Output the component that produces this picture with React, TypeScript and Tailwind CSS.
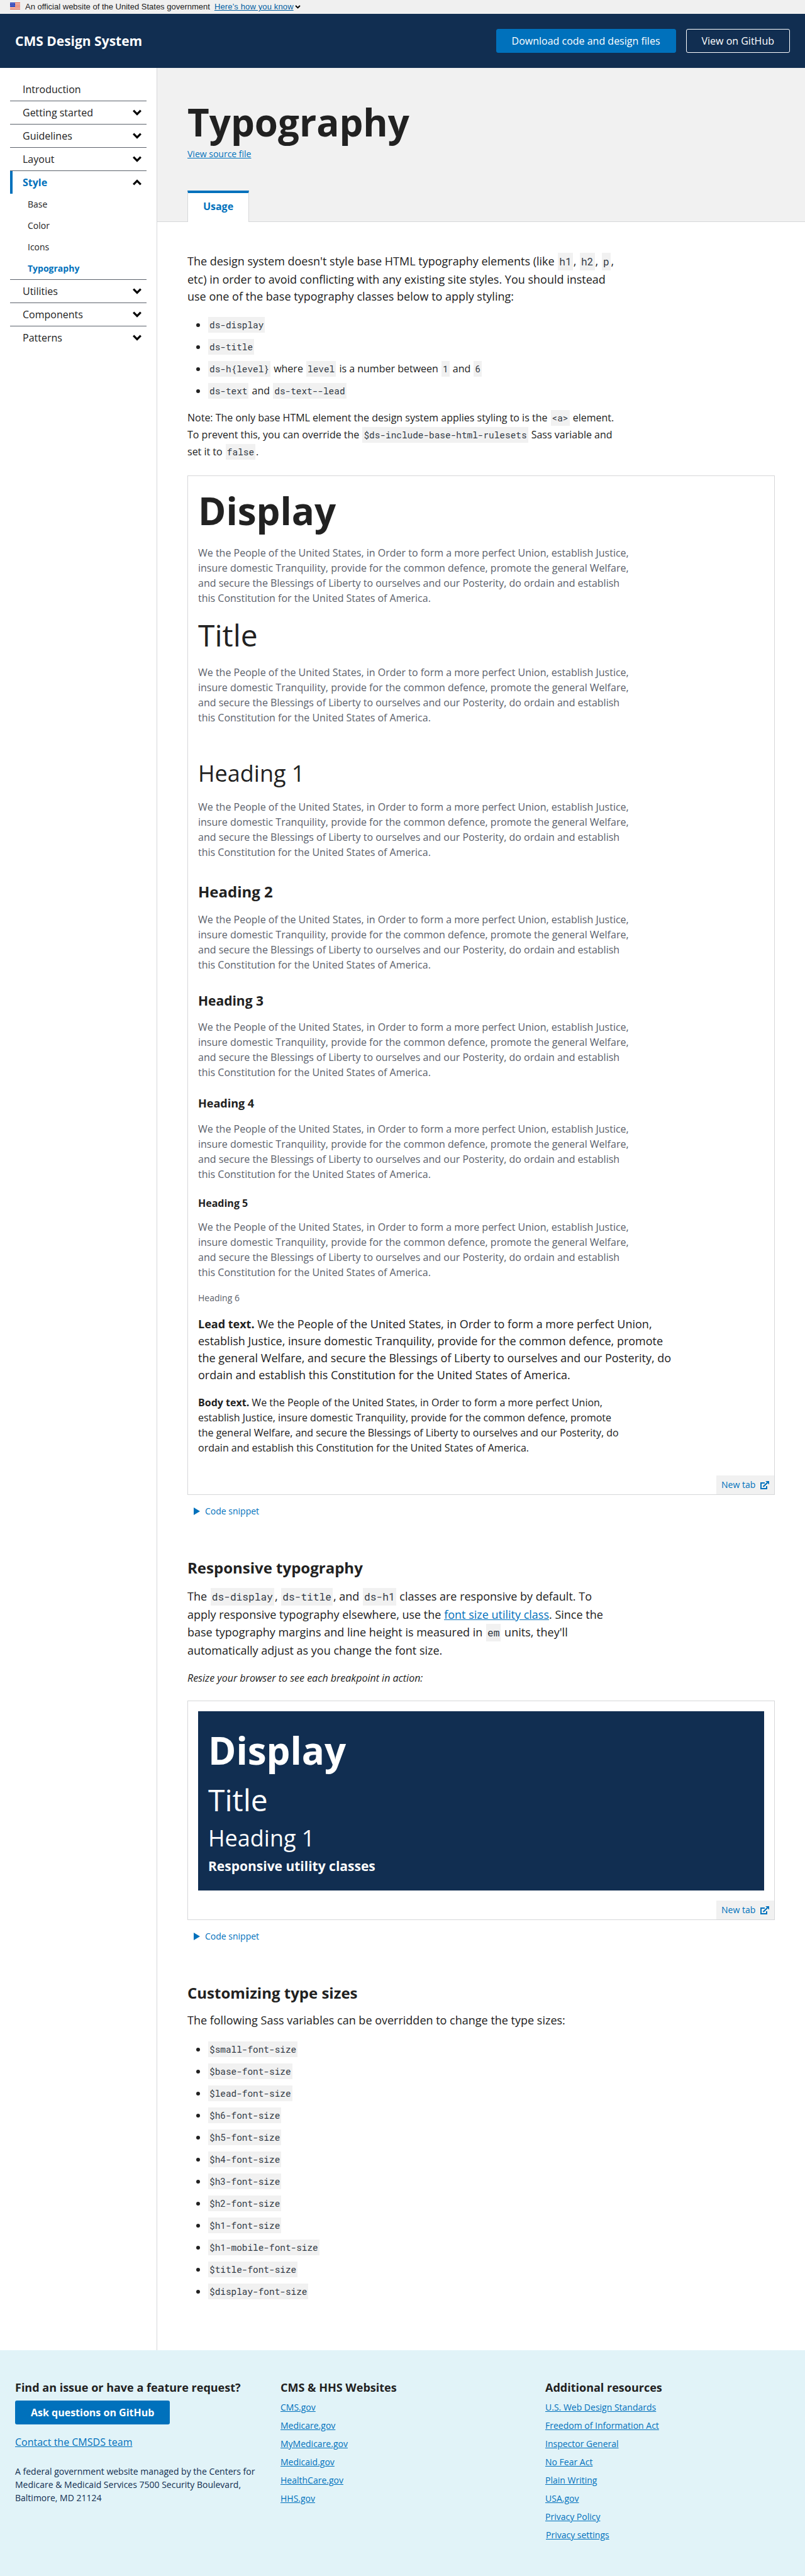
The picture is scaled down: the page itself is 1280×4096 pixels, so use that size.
import React from "react";

const PREAMBLE = [
  "We the People of the United States, in Order to form a more perfect Union, establish Justice,",
  "insure domestic Tranquility, provide for the common defence, promote the general Welfare,",
  "and secure the Blessings of Liberty to ourselves and our Posterity, do ordain and establish",
  "this Constitution for the United States of America.",
];

const SASS_VARIABLES = [
  "$small-font-size",
  "$base-font-size",
  "$lead-font-size",
  "$h6-font-size",
  "$h5-font-size",
  "$h4-font-size",
  "$h3-font-size",
  "$h2-font-size",
  "$h1-font-size",
  "$h1-mobile-font-size",
  "$title-font-size",
  "$display-font-size",
];

function Chevron({ className = "" }: { className?: string }) {
  return (
    <svg viewBox="0 0 14 10" fill="none" stroke="#000" strokeWidth="3.2" className={className}>
      <path d="M1.2 1.7 7 7.5l5.8-5.8" />
    </svg>
  );
}

function Flag() {
  const stripes = [0, 2, 4, 6, 8, 10];
  const stars = [
    [1, 1], [3, 1], [5, 1], [7, 1],
    [2, 2.5], [4, 2.5], [6, 2.5],
    [1, 4], [3, 4], [5, 4], [7, 4],
  ];
  return (
    <svg viewBox="0 0 16 11" className="h-[11px] w-4 shrink-0">
      <rect width="16" height="11" fill="#fff" />
      {stripes.map((y) => (
        <rect key={y} y={y} width="16" height="1" fill="#db3e1f" />
      ))}
      <rect width="8" height="7" fill="#1e33b1" />
      {stars.map(([x, y]) => (
        <rect key={`${x}-${y}`} x={x - 0.4} y={y} width="0.8" height="0.8" fill="#fff" />
      ))}
    </svg>
  );
}

function ExternalLink() {
  return (
    <svg viewBox="0 0 14 13" className="h-[13px] w-3.5 shrink-0" fill="none" stroke="currentColor" strokeWidth="2">
      <path d="M7 3H1v9h9V8" />
      <path d="M4.5 9 11 2.8" strokeWidth="2.2" />
      <path d="M8.2 0H14v5.6Z" fill="currentColor" stroke="none" />
    </svg>
  );
}

function Code({ children }: { children: React.ReactNode }) {
  return (
    <code className="mx-px bg-[#f1f1f1] px-0.5 py-[3px] font-['Roboto_Mono','Liberation_Mono',monospace] text-[0.9em] leading-none text-[#323a45]">
      {children}
    </code>
  );
}

function Line({ className, children }: { className: string; children: React.ReactNode }) {
  return <span className={`block whitespace-nowrap ${className}`}>{children}</span>;
}

function Preamble({ className }: { className: string }) {
  return (
    <p className={`text-[#5b616b] ${className}`}>
      {PREAMBLE.map((line) => (
        <Line key={line} className="leading-6">
          {line}
        </Line>
      ))}
    </p>
  );
}

function NavItem({ label, open, plain, last }: { label: string; open?: boolean; plain?: boolean; last?: boolean }) {
  return (
    <div className={last || open ? "" : "border-b border-[#5b616b]"}>
      <div
        className={
          open
            ? "flex h-9 items-center justify-between border-l-4 border-[#0071bc] pr-2 pl-4 font-bold text-[#0071bc]"
            : "flex h-9 items-center justify-between pr-2 pl-5"
        }
      >
        <span className="leading-6">{label}</span>
        {!plain && <Chevron className={open ? "h-2.5 w-3.5 rotate-180" : "h-2.5 w-3.5"} />}
      </div>
    </div>
  );
}

function Bullet({ children }: { children: React.ReactNode }) {
  return (
    <li className="flex h-[35px] items-start whitespace-nowrap">
      <span className="mt-2.5 mr-3 ml-3.5 size-1.5 shrink-0 rounded-full bg-[#212121]" />
      <span className="leading-6">{children}</span>
    </li>
  );
}

function NewTab() {
  return (
    <a className="absolute right-0 bottom-0 flex h-[30px] w-[92px] items-center gap-2 bg-[#f1f1f1] pl-2 text-sm leading-[30px] whitespace-nowrap text-[#0071bc]">
      New tab
      <ExternalLink />
    </a>
  );
}

function CodeSnippet() {
  return (
    <div className="mt-[15px] flex h-[21px] items-center gap-2 pl-2.5 text-sm leading-[21px] text-[#0071bc]">
      <svg viewBox="0 0 10 12" className="h-3 w-2.5" fill="currentColor">
        <path d="M0 0 10 6 0 12Z" />
      </svg>
      Code snippet
    </div>
  );
}

function FooterLinks({ title, links, nudgeLast }: { title: string; links: string[]; nudgeLast?: boolean }) {
  return (
    <div>
      <h2 className="text-lg leading-6 font-bold">{title}</h2>
      <ul className="mt-[9px] flex flex-col gap-2 text-sm leading-[21px] text-[#0071bc]">
        {links.map((link, i) => (
          <li key={link} className={nudgeLast && i === links.length - 1 ? "pl-px" : ""}>
            <a className="underline">{link}</a>
          </li>
        ))}
      </ul>
    </div>
  );
}

export default function App() {
  return (
    <div className="flex h-[4096px] w-[1280px] flex-col overflow-hidden bg-white font-['Open_Sans',sans-serif] text-base text-[#212121]">
      <div className="flex h-[22px] items-start bg-[#f0f0f0] pl-4 font-['Liberation_Sans',sans-serif] text-[13px] leading-[21px] text-[#1b1b1b]">
        <div className="mt-1 mr-2 flex">
          <Flag />
        </div>
        <span>An official website of the United States government</span>
        <a className="ml-[7px] tracking-[0.13px] text-[#005ea2] underline underline-offset-1">Here’s how you know</a>
        <Chevron className="mt-[8px] ml-[2px] h-1.5 w-[9px]" />
      </div>

      <header className="flex h-[86px] items-center justify-between bg-[#112e51] px-6 text-white">
        <span className="text-[21px] leading-7 font-bold">CMS Design System</span>
        <div className="flex gap-4">
          <a className="flex h-[38px] items-center rounded-[3px] border border-[#0071bc] bg-[#0071bc] px-6 leading-6">
            Download code and design files
          </a>
          <a className="flex h-[38px] items-center rounded-[3px] border border-white px-6 leading-6">View on GitHub</a>
        </div>
      </header>

      <div className="flex h-[3629px] shrink-0">
        <nav className="w-[250px] shrink-0 border-r border-[#d6d7d9] px-4 pt-4">
          <NavItem label="Introduction" plain />
          <NavItem label="Getting started" />
          <NavItem label="Guidelines" />
          <NavItem label="Layout" />
          <NavItem label="Style" open />
          <ul className="border-b border-[#5b616b] pl-7 text-sm leading-[34px]">
            <li>Base</li>
            <li>Color</li>
            <li>Icons</li>
            <li className="font-bold text-[#0071bc]">Typography</li>
          </ul>
          <NavItem label="Utilities" />
          <NavItem label="Components" />
          <NavItem label="Patterns" last />
        </nav>

        <main className="flex-1">
          <div className="h-[245px] border-b border-[#d6d7d9] bg-[#f1f1f1] px-12 pt-[47px]">
            <h1 className="text-[60px] leading-[78px] font-bold">Typography</h1>
            <a className="mt-px block text-sm leading-[21px] text-[#0071bc] underline">View source file</a>
            <div className="mt-12 h-[50px] w-[98px] border-x border-t-4 border-x-[#d6d7d9] border-t-[#0071bc] bg-white pt-[9px] text-center leading-6 font-bold text-[#0071bc]">
              Usage
            </div>
          </div>

          <div className="px-12 pt-[49px]">
            <p className="text-lg [&_code]:pb-1">
              <Line className="h-[29px] leading-[27px]">
                The design system doesn't style base HTML typography elements (like <Code>h1</Code>, <Code>h2</Code>,{" "}
                <Code>p</Code>,
              </Line>
              <Line className="leading-[27px]">
                etc) in order to avoid conflicting with any existing site styles. You should instead
              </Line>
              <Line className="leading-[27px]">use one of the base typography classes below to apply styling:</Line>
            </p>
            <ul className="mt-[19px]">
              <Bullet>
                <Code>ds-display</Code>
              </Bullet>
              <Bullet>
                <Code>ds-title</Code>
              </Bullet>
              <Bullet>
                <Code>{"ds-h{level}"}</Code> where <Code>level</Code> is a number between <Code>1</Code> and{" "}
                <Code>6</Code>
              </Bullet>
              <Bullet>
                <Code>ds-text</Code> and <Code>ds-text--lead</Code>
              </Bullet>
            </ul>
            <p className="mt-2">
              <Line className="h-[27px] leading-6">
                Note: The only base HTML element the design system applies styling to is the <Code>{"<a>"}</Code>{" "}
                element.
              </Line>
              <Line className="h-[27px] leading-6">
                To prevent this, you can override the <Code>$ds-include-base-html-rulesets</Code> Sass variable and
              </Line>
              <Line className="h-[27px] leading-6">
                set it to <Code>false</Code>.
              </Line>
            </p>

            <section className="relative mt-[23px] h-[1621px] border border-[#d6d7d9] p-4">
              <h2 className="text-[60px] leading-[78px] font-bold">Display</h2>
              <Preamble className="mt-4" />
              <h2 className="mt-[15px] text-5xl leading-[63px]">Title</h2>
              <Preamble className="mt-4" />
              <h2 className="mt-[53px] text-4xl leading-[47px]">Heading 1</h2>
              <Preamble className="mt-[18px]" />
              <h3 className="mt-[35px] text-2xl leading-[31px] font-bold">Heading 2</h3>
              <Preamble className="mt-[17px]" />
              <h3 className="mt-[31px] text-[21px] leading-7 font-bold">Heading 3</h3>
              <Preamble className="mt-4" />
              <h4 className="mt-[25px] text-lg leading-6 font-bold">Heading 4</h4>
              <Preamble className="mt-[17px]" />
              <h5 className="mt-[22px] leading-6 font-bold">Heading 5</h5>
              <Preamble className="mt-3.5" />
              <h6 className="mt-[18px] text-sm leading-[21px] text-[#5b616b]">Heading 6</h6>
              <p className="mt-[18px] text-lg">
                <Line className="leading-[27px]">
                  <strong className="font-bold">Lead text.</strong> We the People of the United States, in Order to form
                  a more perfect Union,
                </Line>
                <Line className="leading-[27px]">
                  establish Justice, insure domestic Tranquility, provide for the common defence, promote
                </Line>
                <Line className="leading-[27px]">
                  the general Welfare, and secure the Blessings of Liberty to ourselves and our Posterity, do
                </Line>
                <Line className="leading-[27px]">
                  ordain and establish this Constitution for the United States of America.
                </Line>
              </p>
              <p className="mt-[18px]">
                <Line className="leading-6">
                  <strong className="font-bold">Body text.</strong> We the People of the United States, in Order to form
                  a more perfect Union,
                </Line>
                <Line className="leading-6">
                  establish Justice, insure domestic Tranquility, provide for the common defence, promote
                </Line>
                <Line className="leading-6">
                  the general Welfare, and secure the Blessings of Liberty to ourselves and our Posterity, do
                </Line>
                <Line className="leading-6">
                  ordain and establish this Constitution for the United States of America.
                </Line>
              </p>
              <NewTab />
            </section>
            <CodeSnippet />

            <h2 className="mt-16 text-2xl leading-[31px] font-bold">Responsive typography</h2>
            <p className="mt-[17px] text-lg leading-[27px] [&_code]:pb-1">
              <Line className="h-[29px]">
                The <Code>ds-display</Code>, <Code>ds-title</Code>, and <Code>ds-h1</Code> classes are responsive by
                default. To
              </Line>
              <Line className="h-7">
                apply responsive typography elsewhere, use the{" "}
                <a className="text-[#0071bc] underline">font size utility class</a>. Since the
              </Line>
              <Line className="h-[29px]">
                base typography margins and line height is measured in <Code>em</Code> units, they'll
              </Line>
              <Line className="h-[27px]">automatically adjust as you change the font size.</Line>
            </p>
            <p className="mt-[18px] leading-6 italic">Resize your browser to see each breakpoint in action:</p>

            <section className="relative mt-6 h-[349px] border border-[#d6d7d9] p-4">
              <div className="h-[285px] bg-[#112e51] px-4 pt-[23px] text-white">
                <h2 className="text-[60px] leading-[78px] font-bold">Display</h2>
                <h2 className="mt-2 text-5xl leading-[63px]">Title</h2>
                <h2 className="mt-1.5 text-4xl leading-[47px]">Heading 1</h2>
                <h2 className="mt-[7px] text-[21px] leading-7 font-bold">Responsive utility classes</h2>
              </div>
              <NewTab />
            </section>
            <CodeSnippet />

            <h2 className="mt-16 text-2xl leading-[31px] font-bold">Customizing type sizes</h2>
            <p className="mt-[15px] text-lg leading-[27px]">
              The following Sass variables can be overridden to change the type sizes:
            </p>
            <ul className="mt-5">
              {SASS_VARIABLES.map((name) => (
                <Bullet key={name}>
                  <Code>{name}</Code>
                </Bullet>
              ))}
            </ul>
          </div>
        </main>
      </div>

      <footer className="grid flex-1 grid-cols-[422px_421px_1fr] bg-[#e1f3f8] px-6 pt-[47px]">
        <div>
          <h2 className="text-lg leading-6 font-bold">Find an issue or have a feature request?</h2>
          <a className="mt-[9px] flex h-[38px] w-fit items-center rounded-[3px] bg-[#0071bc] px-[25px] leading-6 font-bold text-white">
            Ask questions on GitHub
          </a>
          <a className="mt-4 block leading-6 text-[#0071bc] underline">Contact the CMSDS team</a>
          <p className="mt-6 w-[390px] text-sm leading-[21px] text-[#112e51]">
            A federal government website managed by the Centers for Medicare &amp; Medicaid Services 7500 Security
            Boulevard, Baltimore, MD 21124
          </p>
        </div>
        <FooterLinks
          title="CMS & HHS Websites"
          links={["CMS.gov", "Medicare.gov", "MyMedicare.gov", "Medicaid.gov", "HealthCare.gov", "HHS.gov"]}
        />
        <FooterLinks
          title="Additional resources"
          links={[
            "U.S. Web Design Standards",
            "Freedom of Information Act",
            "Inspector General",
            "No Fear Act",
            "Plain Writing",
            "USA.gov",
            "Privacy Policy",
            "Privacy settings",
          ]}
          nudgeLast
        />
      </footer>
    </div>
  );
}
